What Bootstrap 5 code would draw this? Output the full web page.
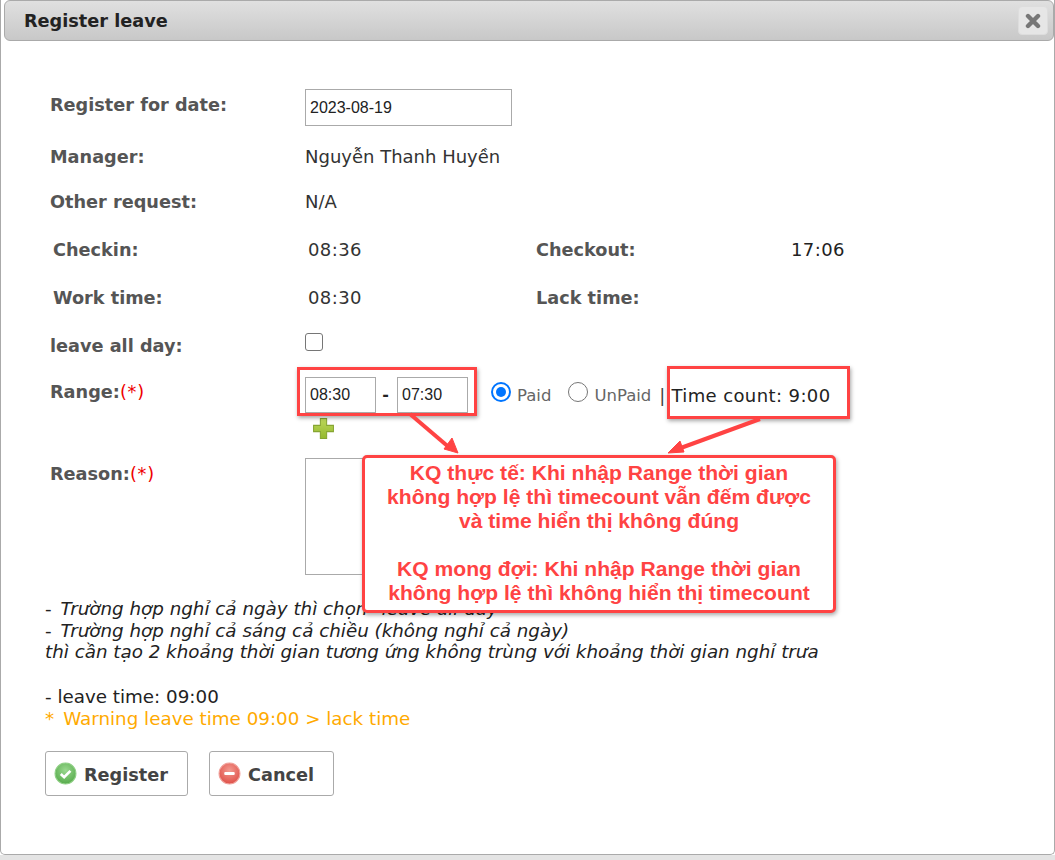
<!DOCTYPE html>
<html lang="vi">
<head>
<meta charset="utf-8">
<title>Register leave</title>
<link href="https://cdn.jsdelivr.net/npm/bootstrap@5.3.0/dist/css/bootstrap.min.css" rel="stylesheet">
<style>
html,body{height:860px;overflow:hidden;background:#fff}
body{font-family:"DejaVu Sans",sans-serif;font-size:18px;color:#222;line-height:22px;position:relative}
.dlg{height:855px;border:1px solid #aaa;border-top:0;border-radius:0 0 5px 5px;width:1055px;position:relative}
.pagefoot{height:5px;background:#e4e4e4}
.dlg-title{height:41px;margin:0 0 0 3px;width:1050px;background:linear-gradient(#e0e0e0,#c8c8c8);border:1px solid #aaa;border-radius:6px;font-weight:700;color:#222;padding:1px 0 0 19px;font-size:17.7px}
.dlg-close{width:30px;height:29px;margin:-1px 5px 0 0;background:#e6e6e6;border:1px solid #ddd;border-radius:4px}
.frm{padding:49px 0 0 49px}
.fr{display:flex}
.lb{width:255px;font-weight:700;color:#555;font-size:17.7px}
.lb2{width:255px;font-weight:700;color:#555;font-size:17.7px}
.v1{width:228px;color:#333}
.dg{letter-spacing:.4px}
.req{color:#e00;font-weight:400;letter-spacing:.8px}
.r-date{height:53px;margin-top:-1px}
.r-date .lb{padding-top:5px}
.r-mgr{height:45px;padding-top:4px}
.r-oth{height:48px;padding-top:4px}
.r-tm{height:48px;padding:4px 0 0 3px}
.r-all{height:46px;padding-top:4px}
.r-rng{height:81px}
.r-rng .lb{padding-top:4px}
.r-rsn{height:135px}
.r-rsn .lb{padding-top:5px}
.inp{border:1px solid #aaa;background:#fff;color:#222;padding:0 4px;border-radius:0;display:block;font-family:"Liberation Sans",sans-serif}
.inp-date{width:207px;height:37px;font-size:16px;line-height:20px}
.inp-t{width:71px;height:36px;font-size:16px;line-height:20px}
.ta{width:340px;height:117px;resize:none}
.chk{width:18px;height:18px;border:1.500px solid #767676;border-radius:3px;margin-top:-2px}
.dash{width:21px;text-align:center;font-weight:700;font-size:16px;margin-left:-1px;margin-right:1px}
.radio{width:20px;height:20px;border-radius:50%;border:1.500px solid #767676;background:#fff;display:block;flex:none;margin-top:-6px}
.radio.on{border:2px solid #0075ff;padding:3px}
.radio.on i{display:block;width:10px;height:10px;border-radius:50%;background:#0075ff}
.rng-txt{color:#666;font-size:16.500px;line-height:20px;margin:2px 0 0 6px}
.rad-1{margin-left:23px}
.rad-2{margin-left:17px}
.sep{margin:2px 0 0 8px;color:#444}
.cnt{color:#222;margin:2px 0 0 6px}
.plus{display:block;margin:4px 0 0 7px}
.notes{margin:5px 0 0 -5px;font-size:18.3px;line-height:21.7px;color:#222}
.notes .sp{margin-top:23px}
.dsh{margin-right:3px}
.warn{color:#fa0}
.warn b{font-weight:400;margin-right:9px}
.btns{gap:21px;margin:21px 0 0 -5px}
.bt{height:45px;border:1px solid #aaa;border-radius:3px;background:#fff;font-weight:700;color:#444;font-size:17.7px;display:flex;align-items:center;gap:7px;padding:3px 19px 0 8px}
.bt svg{margin-top:-3px}
.rect{position:absolute;border:3.500px solid #ff4343;box-shadow:1px 2px 4px rgba(0,0,0,.35)}
.rect-a{left:297px;top:367px;width:180px;height:49px}
.rect-b{left:667px;top:366px;width:183px;height:53px}
.callout{position:absolute;left:362px;top:455px;width:474px;height:158px;background:#fff;border:3.500px solid #ff4343;border-radius:5px;box-shadow:1px 2px 4px rgba(0,0,0,.35);color:#ff4343;font:700 21.100px/24px "Liberation Sans",sans-serif;text-align:center;padding-top:3px}
.arrows{position:absolute;left:0;top:0}
</style>
</head>
<body>
<div class="dlg">
  <div class="dlg-title d-flex align-items-center justify-content-between">
    <span>Register leave</span>
    <span class="dlg-close d-flex align-items-center justify-content-center">
      <svg width="16" height="16" viewBox="0 0 16 16"><path d="M3 3L13 13M13 3L3 13" stroke="#777" stroke-width="4.400" stroke-linecap="round"/></svg>
    </span>
  </div>
  <div class="frm">
    <div class="fr r-date"><div class="lb">Register for date:</div><input class="inp inp-date" value="2023-08-19"></div>
    <div class="fr r-mgr"><div class="lb">Manager:</div><div class="v1">Nguyễn Thanh Huyền</div></div>
    <div class="fr r-oth"><div class="lb">Other request:</div><div class="v1">N/A</div></div>
    <div class="fr r-tm"><div class="lb">Checkin:</div><div class="v1 dg">08:36</div><div class="lb2">Checkout:</div><div class="dg">17:06</div></div>
    <div class="fr r-tm"><div class="lb">Work time:</div><div class="v1 dg">08:30</div><div class="lb2">Lack time:</div></div>
    <div class="fr r-all"><div class="lb">leave all day:</div><div class="chk"></div></div>
    <div class="fr r-rng">
      <div class="lb">Range:<span class="req">(*)</span></div>
      <div>
        <div class="d-flex align-items-center">
          <input class="inp inp-t" value="08:30"><span class="dash">-</span><input class="inp inp-t" value="07:30">
          <span class="radio on rad-1"><i></i></span><span class="rng-txt">Paid</span>
          <span class="radio rad-2"></span><span class="rng-txt">UnPaid</span>
          <span class="sep">|</span><span class="cnt dg">Time count: 9:00</span>
        </div>
        <svg class="plus" width="23" height="23" viewBox="0 0 22 22"><defs><linearGradient id="pg" x1="0" y1="0" x2="0" y2="1"><stop offset="0" stop-color="#bcd75a"/><stop offset="1" stop-color="#94b92f"/></linearGradient></defs><path d="M8 1.500h6v6.500h6.500v6H14v6.500H8V14H1.500V8H8z" fill="url(#pg)" stroke="#86a532"/></svg>
      </div>
    </div>
    <div class="fr r-rsn"><div class="lb">Reason:<span class="req">(*)</span></div><textarea class="inp ta"></textarea></div>
    <div class="notes">
      <div><span class="dsh">- </span><em>Trường hợp nghỉ cả ngày thì chọn "leave all day"</em></div>
      <div><span class="dsh">- </span><em>Trường hợp nghỉ cả sáng cả chiều (không nghỉ cả ngày)</em></div>
      <div><em>thì cần tạo 2 khoảng thời gian tương ứng không trùng với khoảng thời gian nghỉ trưa</em></div>
      <div class="sp">- leave time: 09:00</div>
      <div class="warn"><b>*</b>Warning leave time 09:00 &gt; lack time</div>
    </div>
    <div class="d-flex btns">
      <button class="bt" type="button">
        <svg width="23" height="23" viewBox="0 0 22 22"><defs><radialGradient id="gg" cx=".5" cy=".35" r=".65"><stop offset="0" stop-color="#9ad88f"/><stop offset="1" stop-color="#57ab4c"/></radialGradient></defs><circle cx="11" cy="11" r="10" fill="url(#gg)" stroke="#8fcf85"/><path d="M6.500 11.500l3.200 3 6-6" fill="none" stroke="#fff" stroke-width="2.600"/></svg>Register</button>
      <button class="bt" type="button">
        <svg width="23" height="23" viewBox="0 0 22 22"><defs><radialGradient id="gr" cx=".5" cy=".35" r=".65"><stop offset="0" stop-color="#f39a90"/><stop offset="1" stop-color="#df5048"/></radialGradient></defs><circle cx="11" cy="11" r="10" fill="url(#gr)" stroke="#f0a09a"/><rect x="6" y="9.500" width="10" height="3" rx="1" fill="#fff"/></svg>Cancel</button>
    </div>
  </div>
</div>
<div class="pagefoot"></div>
<div class="rect rect-a"></div>
<div class="rect rect-b"></div>
<svg class="arrows" width="1055" height="860">
  <g fill="#ff4343" stroke="#ff4343">
    <path d="M410 414L451 449" stroke-width="4"/><path d="M458 453L444 449L452 438z"/>
    <path d="M760 419L678 449" stroke-width="4"/><path d="M668 453L680 441L684 452z"/>
  </g>
</svg>
<div class="callout">KQ thực tế: Khi nhập Range thời gian<br>không hợp lệ thì timecount vẫn đếm được<br>và time hiển thị không đúng<br><br>KQ mong đợi: Khi nhập Range thời gian<br>không hợp lệ thì không hiển thị timecount</div>
<script src="https://cdn.jsdelivr.net/npm/bootstrap@5.3.0/dist/js/bootstrap.bundle.min.js"></script>
</body>
</html>
